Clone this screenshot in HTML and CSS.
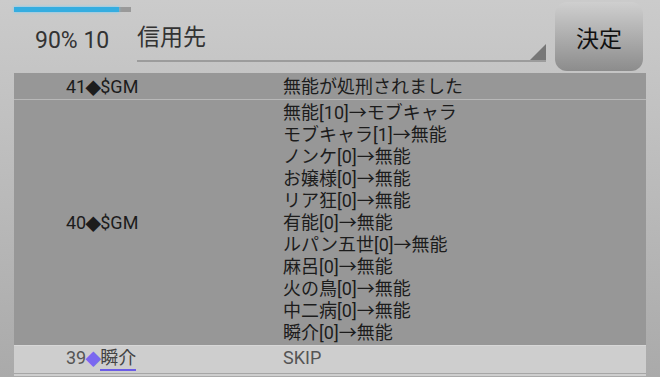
FILE: index.html
```html
<!DOCTYPE html>
<html lang="ja">
<head>
<meta charset="UTF-8">
<title>ログ</title>
<link rel="stylesheet" href="styles.css">
</head>
<body>
<div class="header">
  <div class="status">
    <div class="progress"><div class="progress-fill"></div></div>
    <div class="status-text">90% 10</div>
  </div>
  <div class="select">
    <span class="select-text">信用先</span>
  </div>
  <button class="decide">決定</button>
</div>
<div class="log">
  <div class="row dark">
    <div class="who">41<span class="mark">◆</span>$GM</div>
    <div class="what">無能が処刑されました</div>
  </div>
  <div class="row dark sep">
    <div class="who">40<span class="mark">◆</span>$GM</div>
    <div class="what">
      無能[10]→モブキャラ<br>
      モブキャラ[1]→無能<br>
      ノンケ[0]→無能<br>
      お嬢様[0]→無能<br>
      リア狂[0]→無能<br>
      有能[0]→無能<br>
      ルパン五世[0]→無能<br>
      麻呂[0]→無能<br>
      火の鳥[0]→無能<br>
      中二病[0]→無能<br>
      瞬介[0]→無能
    </div>
  </div>
  <div class="row light">
    <div class="who muted">39<span class="mark gem">◆</span><span class="name">瞬介</span></div>
    <div class="what muted">SKIP</div>
  </div>
  <div class="row light last"></div>
</div>
</body>
</html>
```

FILE: styles.css
```css
html, body {
    height: 100%;
    margin: 0;
}
body {
    background: linear-gradient(#cbcbcb, #aaaaaa);
    font-family: Roboto, "Noto Sans CJK JP", sans-serif;
    color: #1c1c1c;
    overflow: hidden;
}
.header {
    display: flex;
    height: 73px;
    padding: 0 17px 0 14px;
}
.status {
    width: 123px;
    display: flex;
    flex-direction: column;
}
.progress {
    margin-top: 7px;
    width: 117px;
    height: 5px;
    background: #999;
}
.progress-fill {
    width: 90%;
    height: 100%;
    background: #35ade0;
    box-shadow: 0 0 3px #6fd0ff;
}
.status-text {
    margin-top: 15px;
    padding-left: 21px;
    font-size: 23px;
    color: #333;
}
.select {
    flex: 1;
    position: relative;
    height: 60px;
    border-bottom: 2px solid #9c9c9c;
}
.select-text {
    display: block;
    margin-top: 18px;
    font-size: 23px;
    color: #333;
}
/* little corner triangle of the spinner */
.select::after {
    content: "";
    position: absolute;
    right: 0;
    bottom: 0;
    border-style: solid;
    border-width: 0 0 16px 16px;
    border-color: transparent transparent #777 transparent;
}
.decide {
    margin: 2px 0 0 9px;
    width: 88px;
    height: 69px;
    border: none;
    border-radius: 12px;
    background: linear-gradient(#cfcfcf, #8c8c8c);
    font-family: Roboto, "Noto Sans CJK JP", sans-serif;
    font-size: 23px;
    color: #111;
    padding: 0;
}
.log {
    margin: 0 14px;
}
.row {
    display: grid;
    grid-template-columns: 269px 1fr;
    font-size: 18px;
    line-height: 22px;
}
.row.dark {
    background: #979797;
    padding: 3px 0 1px;
}
.row.sep {
    border-top: 1px solid #b8b8b8;
    padding: 2px 0 1px;
}
.row.light {
    background: #cecece;
    border-top: 1px solid #d8d8d8;
    padding: 1px 0 2px;
}
.row.last {
    border-top: 1px solid #a6a6a6;
    height: 2px;
    padding: 0;
}
.who {
    padding-left: 52px;
    display: flex;
    align-items: center;
    white-space: pre;
}
.row.light .who {
    align-items: flex-start;
}
.mark {
    font-family: "Noto Sans CJK JP", sans-serif;
    font-size: 16px;
    margin: 0 -1px;
}
.muted {
    color: #555;
}
.gem {
    color: #7a68f0;
}
.name {
    color: #444;
    border-bottom: 2px solid #6b5ce6;
}
```
